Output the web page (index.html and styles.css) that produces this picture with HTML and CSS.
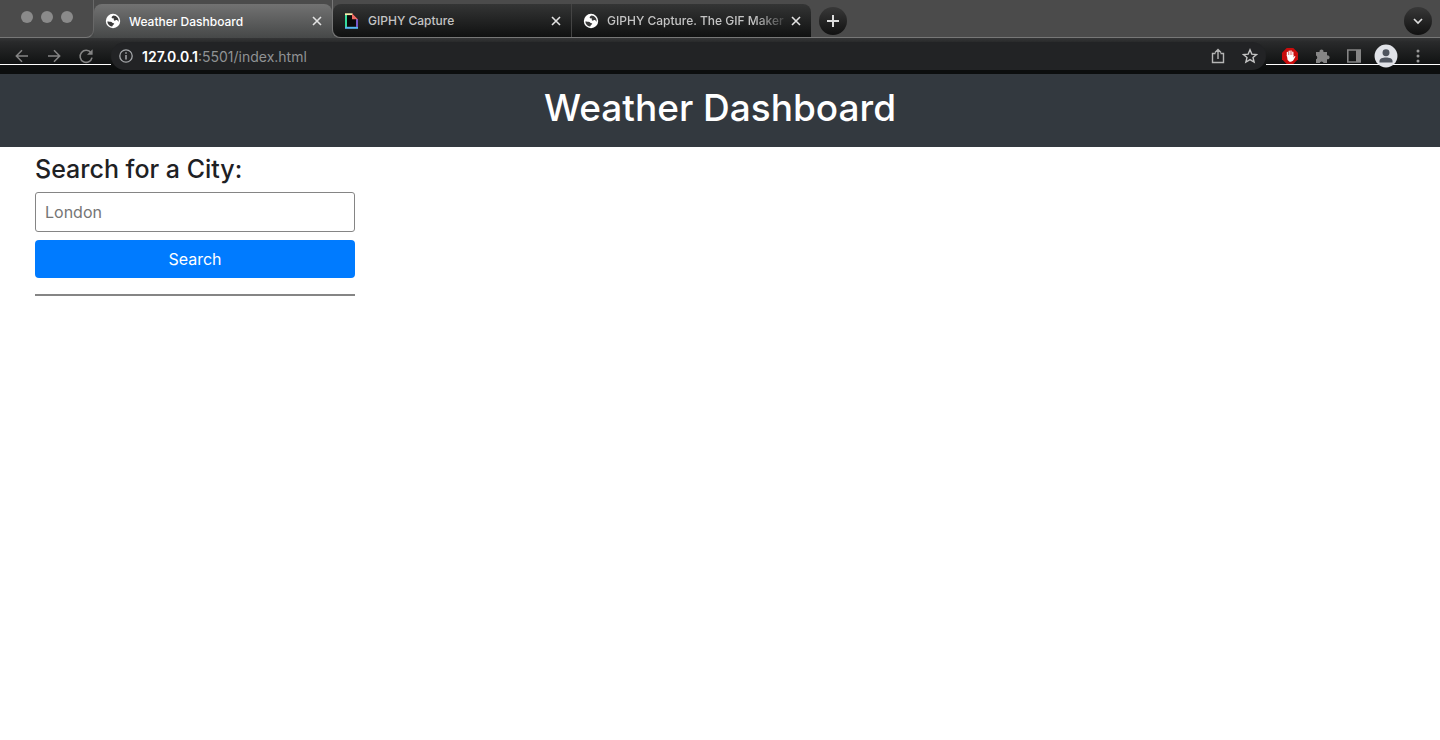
FILE: index.html
```html
<!DOCTYPE html>
<html lang="en">
<head>
<meta charset="utf-8">
<title>Weather Dashboard</title>
<link rel="stylesheet" href="styles.css">
</head>
<body>
<svg class="defs" aria-hidden="true">
  <symbol id="globe" viewBox="0 0 16 16"><circle cx="8" cy="8" r="7.2" fill="#fff"/><path d="M2.300 8.500c1.700-.3 2.200.2 3.200.200 1.800 0 1.600 1.700 3.200 1.500 1 .2.300 1.300-.5 1.600-.8.500-.3 1.300-1.300 1.800-2.600-.5-4.500-2.600-4.600-5.100zM8.500 2.500c-1 .5-2.300 1.500-1.700 2.500.6.700 1.200.1 1.900.6.500.8-.4 1.500.5 2 1.200.4 1.500-.7 2.700-.5.8.3.9 1.300 1.700 1.600.4-3.300-1.900-6-5.100-6.200z" fill="#3b3b3b"/></symbol>
  <symbol id="close" viewBox="0 0 10 10"><path d="M1 1l8 8M9 1L1 9" stroke="currentColor" stroke-width="1.6" fill="none"/></symbol>
</svg>
<div class="browser">
  <div class="tabstrip">
    <div class="controls-cell">
      <div class="controls"><span class="dot"></span><span class="dot"></span><span class="dot"></span></div>
    </div>
    <div class="tab tab-active">
      <svg class="favicon"><use href="#globe"/></svg>
      <span class="tab-title">Weather Dashboard</span>
      <button class="close" aria-label="Close tab"><svg class="close-icon"><use href="#close"/></svg></button>
    </div>
    <div class="rest-cell">
      <div class="rest">
        <div class="tab tab-dark">
          <svg class="favicon" viewBox="0 0 16 16"><path d="M2 1h7l5 5v9H2z" fill="#0a0a0a"/><path d="M2 1v13" stroke="#35dc9c" stroke-width="2"/><path d="M1 1.200H8.500" stroke="#f5efae" stroke-width="1.800"/><path d="M1 14.800h13" stroke="#58b8f2" stroke-width="2"/><path d="M13 6v8" stroke="#7657c9" stroke-width="2"/><path d="M8 .3l6 5.900H8z" fill="#ee6a62"/></svg>
          <span class="tab-title">GIPHY Capture</span>
          <button class="close" aria-label="Close tab"><svg class="close-icon"><use href="#close"/></svg></button>
        </div>
        <div class="tab tab-dark tab-last">
          <svg class="favicon"><use href="#globe"/></svg>
          <span class="tab-title fade">GIPHY Capture. The GIF Maker</span>
          <button class="close" aria-label="Close tab"><svg class="close-icon"><use href="#close"/></svg></button>
        </div>
        <button class="round" aria-label="New tab"><svg width="14" height="14" viewBox="0 0 14 14"><path d="M7 1v12M1 7h12" stroke="#ddd" stroke-width="2"/></svg></button>
        <button class="round search-tabs" aria-label="Search tabs"><svg width="10" height="8" viewBox="0 0 10 8"><path d="M1 2l4 4 4-4" fill="none" stroke="#ddd" stroke-width="1.700"/></svg></button>
      </div>
    </div>
  </div>
  <div class="toolbar">
    <div class="nav">
      <button class="tool" aria-label="Back"><svg viewBox="0 0 16 16"><path d="M14 8H2.500M8 2.300L2.300 8 8 13.700" fill="none" stroke="#858585" stroke-width="1.500"/></svg></button>
      <button class="tool" aria-label="Forward"><svg viewBox="0 0 16 16"><path d="M2 8h11.500M8 2.300L13.700 8 8 13.700" fill="none" stroke="#858585" stroke-width="1.500"/></svg></button>
      <button class="tool" aria-label="Reload"><svg viewBox="0 0 16 16"><path d="M13 4.800A6 6 0 1 0 14 9.600" fill="none" stroke="#858585" stroke-width="1.600"/><path d="M14.600 1.200v5.600H9z" fill="#858585"/></svg></button>
    </div>
    <div class="omnibox">
      <svg class="info" viewBox="0 0 16 16"><circle cx="8" cy="8" r="6.200" fill="none" stroke="#a5a7aa" stroke-width="1.300"/><path d="M8 7v4.500M8 4.300v1.500" stroke="#a5a7aa" stroke-width="1.500"/></svg>
      <span class="url"><span class="host">127.0.0.1</span>:5501/index.html</span>
      <button class="tool" aria-label="Share"><svg viewBox="0 0 16 16"><path d="M5.500 5.500h-3v9h11v-9h-3M8 11V1.700M5 4.500l3-3 3 3" fill="none" stroke="#b5b5b5" stroke-width="1.400"/></svg></button>
      <button class="tool" aria-label="Bookmark"><svg viewBox="0 0 16 16"><path d="M8 1.800l1.800 4.300 4.700.4-3.500 3 1.100 4.600L8 11.600l-4.100 2.500L5 9.500l-3.500-3 4.700-.4z" fill="none" stroke="#c4c4c4" stroke-width="1.400"/></svg></button>
    </div>
    <div class="extensions">
      <button class="tool" aria-label="Ad blocker"><svg viewBox="0 0 16 16"><path d="M4.700 0h6.600L16 4.700v6.600L11.300 16H4.700L0 11.300V4.700z" fill="#c90c0c"/><path d="M5.400 8V4.500M7.200 7V3.200M9 7V3M10.800 8V4.200" stroke="#fff" stroke-width="1.300" stroke-linecap="round"/><path d="M4.800 7h6.600v2.500l1.300-1.500.8.500-2.500 4.200-2 1H7.500L5.600 12z" fill="#fff"/></svg></button>
      <button class="tool" aria-label="Extensions"><svg viewBox="0 0 16 16"><path d="M2 4h3.600a2 2 0 1 1 3.800 0H13v3.400a2 2 0 1 1 0 3.800V15H9.600a2 2 0 0 0-3.900 0H2v-3.700a2 2 0 0 0 0-3.700z" fill="#858585"/></svg></button>
      <button class="tool" aria-label="Side panel"><svg viewBox="0 0 16 16"><path d="M1.800 2h12.400v12H1.800z" fill="none" stroke="#858585" stroke-width="1.600"/><path d="M10 2h4v12h-4z" fill="#858585"/></svg></button>
      <button class="tool profile" aria-label="Profile"><svg viewBox="0 0 22 22"><circle cx="11" cy="11" r="10.500" fill="#e1e3e8"/><circle cx="11" cy="8" r="3.200" fill="#4f555f"/><path d="M5 17v-1.500c0-4.200 12-4.200 12 0V17z" fill="#4f555f"/></svg></button>
      <button class="tool" aria-label="Menu"><svg viewBox="0 0 16 16"><circle cx="8" cy="3" r="1.500" fill="#999"/><circle cx="8" cy="8" r="1.500" fill="#999"/><circle cx="8" cy="13" r="1.500" fill="#999"/></svg></button>
    </div>
  </div>
</div>
<header class="page-header"><h1>Weather Dashboard</h1></header>
<main class="page">
  <form class="search">
    <label for="city">Search for a City:</label>
    <input id="city" type="text" placeholder="London">
    <button class="submit" type="button">Search</button>
    <hr>
  </form>
</main>
</body>
</html>
```
FILE: styles.css
```css
* { box-sizing: border-box; }
body {
  margin: 0;
  background: #fff;
  color: #1e2124;
  font-family: Inter, "Liberation Sans", sans-serif;
}
button { padding: 0; border: 0; background: none; color: inherit; font: inherit; }
svg { display: block; }
.defs { position: absolute; width: 0; height: 0; }

.tabstrip { display: flex; height: 38px; background: #4b4b4b; }
.controls-cell {
  width: 94px;
  flex: none;
  background: linear-gradient(#4b4b4b 50%, #464848 50%);
}
.controls {
  display: flex;
  gap: 8px;
  height: 38px;
  padding: 11px 0 0 21px;
  background: #4b4b4b;
  border-bottom: 1px solid #777;
  border-right: 1px solid #686868;
  border-bottom-right-radius: 8px;
}
.dot { width: 12px; height: 12px; border-radius: 50%; background: #8a8a8a; }
.tab {
  display: flex;
  flex: none;
  align-items: center;
  width: 238px;
  padding: 0 10px 0 11px;
  color: #c4c4c4;
  font-size: 12px;
  font-weight: 500;
}
.tab-active {
  height: 34px;
  margin-top: 4px;
  background: linear-gradient(#727272, #464848);
  border-radius: 8px 8px 0 0;
  color: #fff;
}
.favicon { width: 16px; height: 16px; flex: none; margin-right: 8px; }
.tab-title { flex: 1; overflow: hidden; white-space: nowrap; }
.fade {
  -webkit-mask-image: linear-gradient(90deg, #000 80%, transparent);
  mask-image: linear-gradient(90deg, #000 80%, transparent);
}
.close { flex: none; color: #e2e2e2; }
.close-icon { width: 10px; height: 10px; }
.rest-cell {
  display: flex;
  flex: 1;
  background: linear-gradient(#4b4b4b 50%, #464848 50%);
}
.rest {
  display: flex;
  flex: 1;
  padding-top: 4px;
  background: #4b4b4b;
  border-bottom: 1px solid #777;
  border-left: 1px solid #777;
  border-bottom-left-radius: 8px;
}
.tab-dark {
  background: linear-gradient(#343535, #101111);
  border-radius: 8px 0 0 8px;
}
.tab-last { width: 240px; border-left: 1px solid #444; border-radius: 0 8px 0 0; }
.round {
  display: flex;
  flex: none;
  align-items: center;
  justify-content: center;
  width: 28px;
  height: 28px;
  margin: 3px 8px 0;
  border-radius: 50%;
  background: linear-gradient(#383838, #111);
}
.search-tabs { margin-left: auto; }

.toolbar {
  display: flex;
  align-items: stretch;
  height: 36px;
  padding: 4px 0;
  background: linear-gradient(#343536, #292a2b 4px, #0c0e0e 30px);
}
.nav, .extensions {
  display: flex;
  align-items: center;
  gap: 16px;
  height: 23px;
  padding-top: 5px;
  border-bottom: 1px solid #fff;
}
.nav { width: 111px; padding-left: 14px; }
.extensions { padding: 5px 14px 0 16px; }
.tool { width: 16px; height: 16px; flex: none; }
.tool svg { width: 100%; height: 100%; }
.profile { width: 24px; height: 24px; margin: 0 -4px; z-index: 1; }
.omnibox {
  display: flex;
  flex: 1;
  align-items: center;
  gap: 16px;
  padding: 0 8px 0 7px;
  border-radius: 14px;
  background: #222325;
}
.info { width: 16px; height: 16px; flex: none; }
.url { flex: 1; margin-left: -8px; color: #909294; font-size: 14px; }
.host { color: #fff; font-weight: 600; }

.page-header {
  padding: 10px 16px 15px;
  background: #33393f;
  color: #fff;
  text-align: center;
}
h1 { margin: 0; font-size: 37px; font-weight: 500; line-height: 48px; }
.page { padding: 5px 35px; }
.search { display: flex; flex-direction: column; width: 320px; }
label { font-size: 25px; font-weight: 500; line-height: 34px; white-space: nowrap; }
input {
  height: 40px;
  margin-top: 6px;
  padding: 0 9px;
  border: 1px solid #858585;
  border-radius: 3px;
  background: #fff;
  font: 16px Inter, "Liberation Sans", sans-serif;
}
input::placeholder { color: #757575; opacity: 1; }
.submit {
  height: 38px;
  margin-top: 8px;
  border-radius: 4px;
  background: #007bff;
  color: #fff;
  font-size: 16px;
}
hr { width: 100%; height: 2px; margin: 16px 0 0; border: 0; background: #858585; }
```
